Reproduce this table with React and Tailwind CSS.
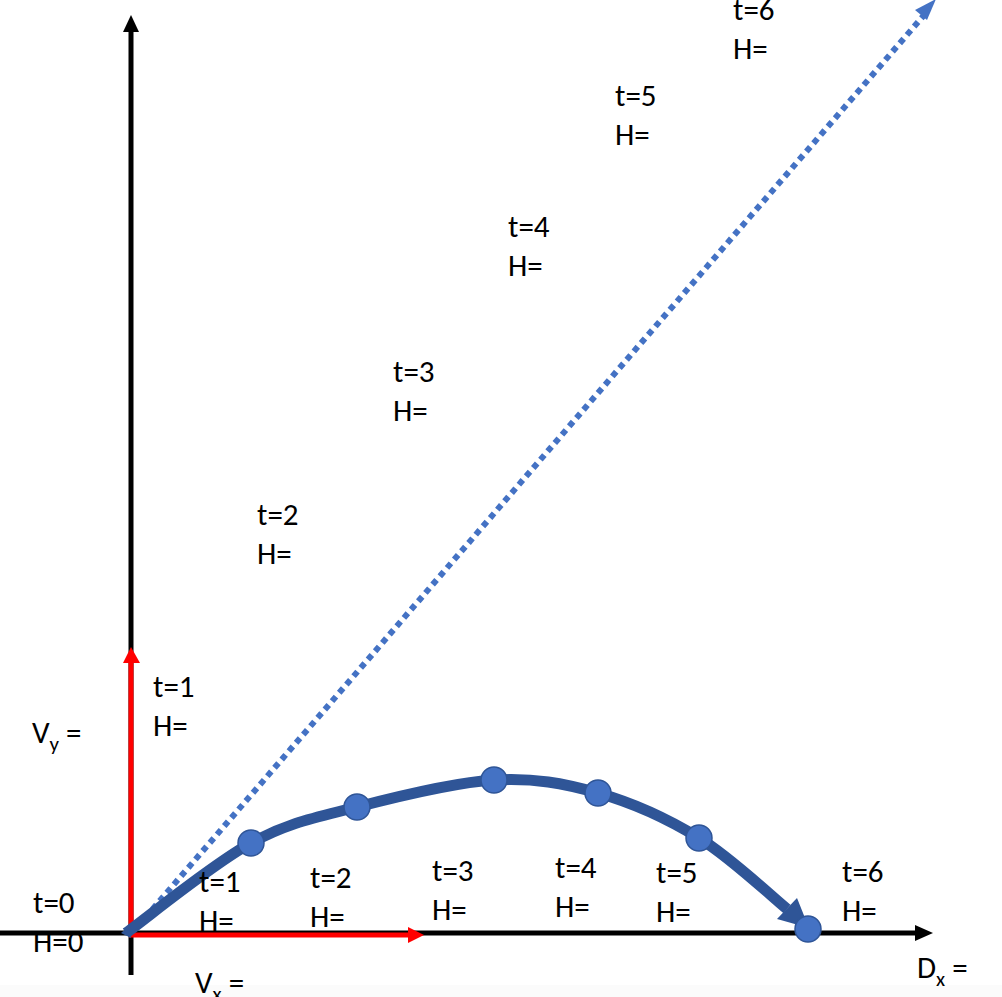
const font = 'Carlito, Lato, "Open Sans", sans-serif'

// upper labels along the dotted line, lower labels under the arc
const labels = [
  { x: 733, y: 20, t: 't=6', h: 'H=' },
  { x: 615, y: 106, t: 't=5', h: 'H=' },
  { x: 508, y: 237, t: 't=4', h: 'H=' },
  { x: 393, y: 382, t: 't=3', h: 'H=' },
  { x: 257, y: 525, t: 't=2', h: 'H=' },
  { x: 153, y: 697, t: 't=1', h: 'H=' },
  { x: 33, y: 913, t: 't=0', h: 'H=0' },
  { x: 199, y: 892, t: 't=1', h: 'H=' },
  { x: 310, y: 888, t: 't=2', h: 'H=' },
  { x: 432, y: 881, t: 't=3', h: 'H=' },
  { x: 555, y: 878, t: 't=4', h: 'H=' },
  { x: 656, y: 883, t: 't=5', h: 'H=' },
  { x: 842, y: 882, t: 't=6', h: 'H=' },
]

const dots = [
  [251, 843],
  [357, 807],
  [494, 780],
  [598, 793],
  [699, 838],
]

const pathPts = [
  [126, 933],
  [251, 843],
  [357, 807],
  [494, 780],
  [598, 793],
  [699, 838],
  [787, 909],
]

function smoothPath(pts) {
  let d = `M ${pts[0][0]} ${pts[0][1]}`
  for (let i = 0; i < pts.length - 1; i++) {
    const p0 = pts[i - 1] || pts[i]
    const p1 = pts[i]
    const p2 = pts[i + 1]
    const p3 = pts[i + 2] || p2
    const c1 = [p1[0] + (p2[0] - p0[0]) / 6, p1[1] + (p2[1] - p0[1]) / 6]
    const c2 = [p2[0] - (p3[0] - p1[0]) / 6, p2[1] - (p3[1] - p1[1]) / 6]
    d += ` C ${c1[0]} ${c1[1]} ${c2[0]} ${c2[1]} ${p2[0]} ${p2[1]}`
  }
  return d
}

export default function App() {
  return (
    <div className="relative w-[1002px] h-[997px] bg-white overflow-hidden">
      <div className="absolute left-0 right-0 bottom-0 h-[12px] bg-[#fbfbfb]" />
      <svg width="1002" height="997" viewBox="0 0 1002 997" className="absolute inset-0">
        {/* axes */}
        <line x1="131" y1="975" x2="131" y2="30" stroke="#000" strokeWidth="5" />
        <polygon points="131,15 123,32 139,32" fill="#000" />
        <line x1="0" y1="933" x2="916" y2="933" stroke="#000" strokeWidth="5" />
        <polygon points="933,933 915,925 915,941" fill="#000" />

        {/* dotted launch line */}
        <line x1="138" y1="926" x2="925" y2="14" stroke="#4472C4" strokeWidth="6" strokeDasharray="6 5" />
        <polygon points="936,-1 915,10 927,20" fill="#4472C4" />

        {/* velocity components */}
        <line x1="131" y1="935" x2="131" y2="660" stroke="#FF0000" strokeWidth="5" />
        <polygon points="131,647 123,663 140,663" fill="#FF0000" />
        <line x1="129" y1="935" x2="410" y2="935" stroke="#FF0000" strokeWidth="5" />
        <polygon points="424,935 408,927 408,943" fill="#FF0000" />

        {/* trajectory */}
        <polygon points="121,933 129,926 131,938" fill="#2F5597" />
        <path d={smoothPath(pathPts)} fill="none" stroke="#2F5597" strokeWidth="11" strokeLinejoin="round" />
        <polygon points="809,928 777,919 797,898" fill="#2F5597" />
        {dots.map(([x, y]) => (
          <circle key={`${x}-${y}`} cx={x} cy={y} r="13" fill="#4472C4" stroke="#2F5597" strokeWidth="1.5" />
        ))}
        <circle cx="808" cy="929" r="13" fill="#4472C4" stroke="#2F5597" strokeWidth="1.5" />

        <g fontFamily={font} fontSize="31" fill="#000">
          {labels.map((l, i) => (
            <text key={i} x={l.x} y={l.y}>
              <tspan x={l.x}>{l.t}</tspan>
              <tspan x={l.x} dy="39">{l.h}</tspan>
            </text>
          ))}
          <text x="32" y="743">
            V<tspan fontSize="21" dy="8">y</tspan><tspan dy="-8"> =</tspan>
          </text>
          <text x="195" y="993">
            V<tspan fontSize="21" dy="8">x</tspan><tspan dy="-8"> =</tspan>
          </text>
          <text x="917" y="978">
            D<tspan fontSize="21" dy="8">x</tspan><tspan dy="-8"> =</tspan>
          </text>
        </g>
      </svg>
    </div>
  )
}
